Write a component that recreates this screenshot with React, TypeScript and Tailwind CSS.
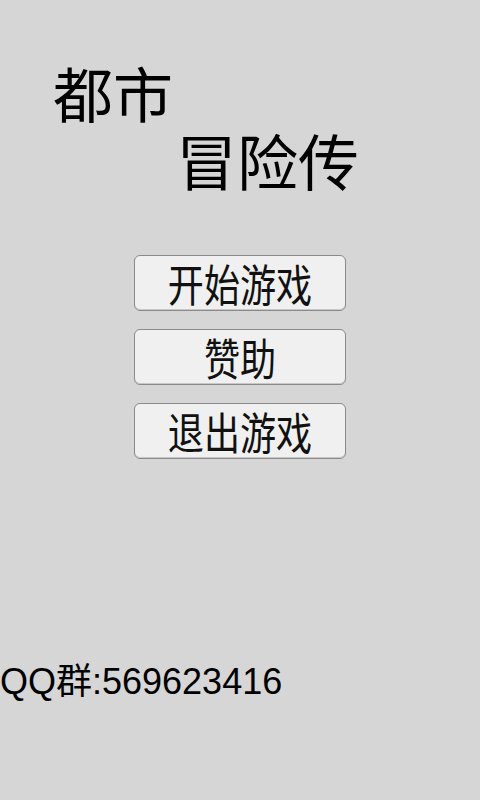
function MenuButton({ label }: { label: string }) {
  return (
    <button className="flex h-[56px] w-[212px] items-center justify-center rounded-[6px] border border-[#8a8a8a] bg-[#f0f0f0] shadow-[inset_0_-1px_0_#c8c8c8]">
      <span className="inline-block scale-x-[0.82] font-['Noto_Sans_CJK_SC',sans-serif] text-[44px] leading-[50px] text-[#111]">
        {label}
      </span>
    </button>
  )
}

export default function App() {
  return (
    <div className="flex h-[800px] w-[480px] flex-col bg-[#d6d6d6] font-['Noto_Sans_CJK_SC',sans-serif] text-black">
      <div className="pt-[62px] pl-[53px] text-[60px] leading-none">都市</div>
      <div className="pt-[7px] pl-[176px] text-[61px] leading-none">冒险传</div>
      <div className="mt-[65px] flex flex-col items-center gap-[18px]">
        <MenuButton label="开始游戏" />
        <MenuButton label="赞助" />
        <MenuButton label="退出游戏" />
      </div>
      <div className="mt-auto mb-[100px] font-['Liberation_Sans','Noto_Sans_CJK_SC',sans-serif] text-[36px] leading-none">
        QQ群:569623416
      </div>
    </div>
  )
}
